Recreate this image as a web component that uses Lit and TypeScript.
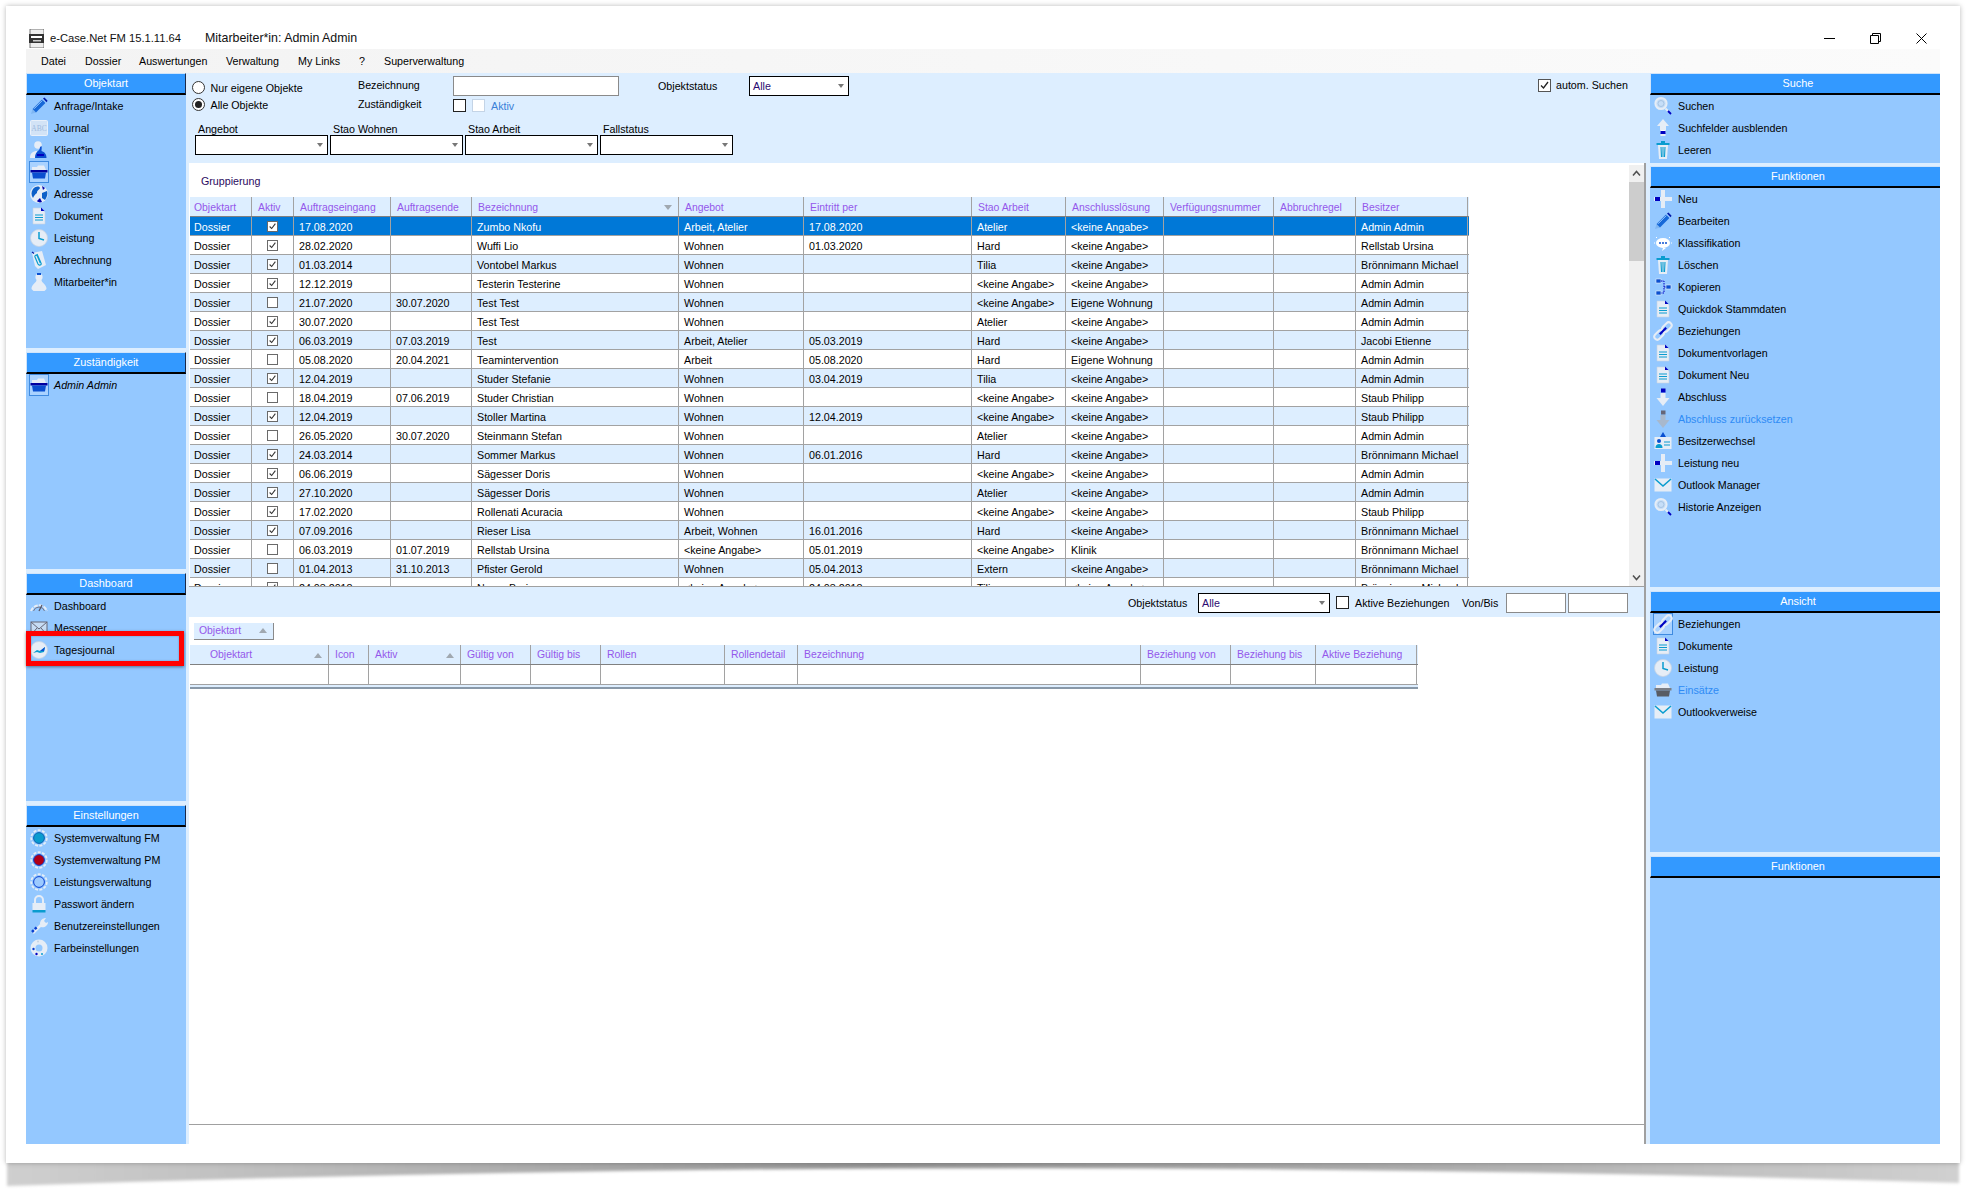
import { LitElement, html, css, svg } from "lit";
import { customElement } from "lit/decorators.js";

const B = "#0a4fd0", D = "#0000c0", T = "#0a9ccf", L = "#e6edf6", G = "#c6d3e2";
const docIcon = svg`<path d="M4 2h8l4 4v12H4z" fill="${L}" stroke="${G}" stroke-width=".6"/><path d="M12 1.5l3.5 3.5h-3.5z" fill="${D}"/><path d="M6 9h8M6 11.5h8M6 14h8" stroke="${T}" stroke-width="1.2"/>`;
const pencil = svg`<path d="M2 18l1.6-5 3.4 3.4z" fill="#7fb6f2"/><path d="M3.6 13L13 3.6l3.4 3.4L7 16.4z" fill="#1668d8"/><path d="M5 12.8l8.3-8.3" stroke="#9ccbff" stroke-width="1"/><path d="M14 2.6l1.4-1 3.2 3.2-1 1.4z" fill="#0018a8"/>`;
const trash = svg`<rect x="3.5" y="3" width="13" height="2" fill="${T}"/><rect x="8" y="1" width="4" height="2" fill="${T}"/><path d="M5 5h10l-1 14H6z" fill="${L}"/><path d="M8 7l.5 10M10 7v10M12 7l-.5 10" stroke="${T}" stroke-width="1.1"/>`;
const plus = svg`<path d="M8 1h4v7h7v4h-7v7H8v-7H1V8h7z" fill="${L}"/><rect x="2" y="8" width="5" height="4" fill="${D}"/>`;
const search = svg`<circle cx="8" cy="7.5" r="5.6" fill="#c6def8" stroke="${L}" stroke-width="2"/><circle cx="8" cy="7.5" r="3" fill="none" stroke="#a8c4e2"/><path d="M12.5 12.5l2.5 2.5" stroke="${L}" stroke-width="2"/><path d="M15 15l3 3" stroke="${D}" stroke-width="1.8"/>`;
const mailLight = svg`<rect x="1.5" y="3.5" width="17" height="13" fill="${L}"/><path d="M2 4l8 7 8-7" fill="none" stroke="${T}" stroke-width="1.6"/>`;
const clock = svg`<circle cx="10" cy="10" r="8.5" fill="${L}" stroke="${G}" stroke-width=".8"/><path d="M10 4v6.5l5 1.5" fill="none" stroke="${T}" stroke-width="1.5"/>`;
const boxIcon = (a: string, b: string) => svg`<path d="M3 8V5h5l1-1.5h6l2 4.500z" fill="${L}"/><rect x="1.5" y="8" width="17" height="2.5" fill="${b}"/><path d="M3 10.5h14l-1 6H4z" fill="${a}"/>`;
const link = svg`<g transform="rotate(-45 10 10)"><rect x="-1" y="7" width="11" height="6" rx="3" fill="none" stroke="${L}" stroke-width="2"/><rect x="10" y="7" width="11" height="6" rx="3" fill="none" stroke="${L}" stroke-width="2"/><rect x="5.5" y="9" width="9" height="2" fill="${D}"/></g>`;
const gear = (c: string, inner: string) => svg`<circle cx="10" cy="10" r="7.8" fill="none" stroke="${L}" stroke-width="1.8" stroke-dasharray="3 1.4"/><circle cx="10" cy="10" r="5.4" fill="${inner}" stroke="${c}" stroke-width="1"/>`;

const ICONS: Record<string, unknown> = {
  pencil,
  abc: svg`<rect x="1.5" y="2.5" width="17" height="15" rx="1" fill="#d2e3f6" stroke="#e8f0fa"/><text x="10" y="13" font-family="Liberation Serif" font-size="7.5" text-anchor="middle" fill="#9fbce0">ABC</text>`,
  user: svg`<circle cx="9" cy="5" r="3.8" fill="${L}"/><path d="M1 18c0-5 3-7 7-7v7z" fill="${L}"/><path d="M6 18c0-4 1.5-6 3-7 1-1 2-2 2-4l1.5-1c.5 2 0 3 0 5 3 1 5 3 5 7z" fill="${B}"/><path d="M8 15h7" stroke="${D}" stroke-width="2"/>`,
  box: boxIcon("#0a4fd0", "#0000a0"),
  globe: svg`<circle cx="10" cy="10" r="9" fill="${L}"/><path d="M4 5c3-3 6-3 7-1-1 2-3 2-3 5-2 1-3 3-4 5-2-3-2-6 0-9zM13 9l5-2c1 3 0 6-2 9l-3-2z" fill="#0d60c8"/><path d="M8 17l3-3 2 4c-2 .8-3.500.6-5-1z" fill="#0000a8"/><path d="M13 2l3 2-2 2z" fill="#0000a8"/>`,
  doc: docIcon,
  clock,
  clip: svg`<path d="M3 3l10-2 4 14-8 4-3-3z" fill="${L}"/><path d="M8 4l4 9c1 2-2 3-3 1L6 7c-.6-1.500 1.500-2.500 2.300-1l3 7" fill="none" stroke="${T}" stroke-width="1.200"/><path d="M3 2l2 1.500" stroke="#0018a8" stroke-width="1.200"/>`,
  person: svg`<circle cx="10" cy="5" r="3.600" fill="${L}"/><rect x="8" y="1" width="4" height="2" fill="#0a4fd0"/><path d="M7.500 8h5c0 3 5 4 5 9l-2 2H4.500l-2-2c0-5 5-6 5-9z" fill="${L}"/>`,
  dash: svg`<path d="M2 15a8.500 8.500 0 0 1 16 0" fill="none" stroke="${L}" stroke-width="2" stroke-dasharray="4 1"/><path d="M4.500 15a5.800 5.800 0 0 1 11 0" fill="none" stroke="#778" stroke-width="1"/><path d="M10 15l3-6" stroke="#556" stroke-width="1.200"/>`,
  mailDark: svg`<rect x="2" y="4" width="16" height="13" fill="#c6dcf4" stroke="#667" /><path d="M2 4l8 7 8-7M2 17l6-7M18 17l-6-7" fill="none" stroke="#667"/>`,
  chart: svg`<circle cx="10" cy="10" r="8.500" fill="${L}" stroke="${G}" stroke-width=".8"/><path d="M4 13l4-3 3 1 5-4-1 5-4 1-3-1z" fill="${T}"/><path d="M11 11l5-4-1 4z" fill="#0a4fd0"/>`,
  gearFm: gear("#0a60b0", T),
  gearPm: gear("#0a3fd0", "#b00018"),
  gearRing: gear("#0a3fd0", "#9ccaff"),
  lock: svg`<path d="M6 9V6a4 4 0 0 1 8 0v3" fill="none" stroke="${L}" stroke-width="2"/><rect x="3.500" y="9" width="13" height="7" fill="${L}"/><rect x="3.500" y="16" width="13" height="2.500" fill="${T}"/>`,
  wrench: svg`<path d="M12 9l-8 8" stroke="${L}" stroke-width="2.500"/><path d="M3 16l5-5" stroke="#0a3fd0" stroke-width="2.500" stroke-dasharray="2.500 1.500"/><path d="M11 8c0-4 3-6 6-6l-2 3 2 2 2-1c0 4-4 6-7 5z" fill="${L}"/>`,
  palette: svg`<circle cx="10" cy="10" r="8.500" fill="${L}"/><circle cx="10" cy="10" r="3.500" fill="#94c8ff"/><circle cx="4.500" cy="11" r="1.200" fill="#0a3fd0"/><circle cx="7.500" cy="16" r="1.200" fill="${D}"/><circle cx="13" cy="16" r="1" fill="${T}"/><circle cx="9" cy="3.500" r="1" fill="${G}"/>`,
  search,
  up: svg`<path d="M10 1l6 7h-3v4H7V8H4z" fill="${L}"/><rect x="7.500" y="12" width="5" height="3" fill="#ffffff"/><rect x="7.500" y="13" width="5" height="3" fill="${D}"/><rect x="7.500" y="16" width="5" height="2" fill="${L}"/>`,
  trash,
  plus,
  bubble: svg`<ellipse cx="10" cy="10" rx="7" ry="5" fill="#fff"/><path d="M10 15l-1 3 4-3z" fill="#fff"/><circle cx="7" cy="10" r="1" fill="${B}"/><circle cx="10" cy="10" r="1" fill="${B}"/><circle cx="13" cy="10" r="1" fill="${B}"/><path d="M1 10h1M18 10h1M3 4l1 1M17 4l-1 1" stroke="#fff"/>`,
  copy: svg`<rect x="3" y="2" width="5" height="4" fill="${B}" stroke="${L}" stroke-width=".6"/><rect x="13" y="8" width="5" height="4" fill="${B}" stroke="${L}" stroke-width=".6"/><rect x="3" y="14" width="5" height="4" fill="${B}" stroke="${L}" stroke-width=".6"/><path d="M8 4h3v12H8M11 10h2" fill="none" stroke="${D}" stroke-dasharray="1.500 1"/>`,
  link,
  down: svg`<rect x="8" y="1.500" width="4.500" height="4" fill="${D}"/><path d="M7.500 6h5v5h4l-6.500 8L3.500 11h4z" fill="${L}"/>`,
  downGrey: svg`<rect x="8" y="1.500" width="4.500" height="4" fill="#667"/><path d="M7.500 6h5v5h4l-6.500 8L3.500 11h4z" fill="#a8b8cc"/>`,
  people: svg`<rect x="1.500" y="6" width="17" height="12" fill="${L}"/><circle cx="6" cy="10" r="2" fill="${B}"/><path d="M2.500 17c0-3 1.500-4 3.500-4s3.500 1 3.500 4z" fill="${T}"/><path d="M11 11h6M11 14h6" stroke="${T}" stroke-width="1.200"/><path d="M7 6l3-5 3 5z" fill="${B}"/>`,
  mail: mailLight,
  boxGrey: boxIcon("#585c64", "#7a7e86"),
};

const ic = (name: string) => html`<svg class="ic" viewBox="0 0 20 20" width="20" height="20">${ICONS[name]}</svg>`;
const KA = "<keine Angabe>";
const AA = "Admin Admin", BM = "Brönnimann Michael", SP = "Staub Philipp";

type Row = [boolean, string, string, string, string, string, string, string, string];
const ROWS: Row[] = [
  [true, "17.08.2020", "", "Zumbo Nkofu", "Arbeit, Atelier", "17.08.2020", "Atelier", KA, AA],
  [true, "28.02.2020", "", "Wuffi Lio", "Wohnen", "01.03.2020", "Hard", KA, "Rellstab Ursina"],
  [true, "01.03.2014", "", "Vontobel Markus", "Wohnen", "", "Tilia", KA, BM],
  [true, "12.12.2019", "", "Testerin Testerine", "Wohnen", "", KA, KA, AA],
  [false, "21.07.2020", "30.07.2020", "Test Test", "Wohnen", "", KA, "Eigene Wohnung", AA],
  [true, "30.07.2020", "", "Test Test", "Wohnen", "", "Atelier", KA, AA],
  [true, "06.03.2019", "07.03.2019", "Test", "Arbeit, Atelier", "05.03.2019", "Hard", KA, "Jacobi Etienne"],
  [false, "05.08.2020", "20.04.2021", "Teamintervention", "Arbeit", "05.08.2020", "Hard", "Eigene Wohnung", AA],
  [true, "12.04.2019", "", "Studer Stefanie", "Wohnen", "03.04.2019", "Tilia", KA, AA],
  [false, "18.04.2019", "07.06.2019", "Studer Christian", "Wohnen", "", KA, KA, SP],
  [true, "12.04.2019", "", "Stoller Martina", "Wohnen", "12.04.2019", KA, KA, SP],
  [false, "26.05.2020", "30.07.2020", "Steinmann Stefan", "Wohnen", "", "Atelier", KA, AA],
  [true, "24.03.2014", "", "Sommer Markus", "Wohnen", "06.01.2016", "Hard", KA, BM],
  [true, "06.06.2019", "", "Sägesser Doris", "Wohnen", "", KA, KA, AA],
  [true, "27.10.2020", "", "Sägesser Doris", "Wohnen", "", "Atelier", KA, AA],
  [true, "17.02.2020", "", "Rollenati Acuracia", "Wohnen", "", KA, KA, SP],
  [true, "07.09.2016", "", "Rieser Lisa", "Arbeit, Wohnen", "16.01.2016", "Hard", KA, BM],
  [false, "06.03.2019", "01.07.2019", "Rellstab Ursina", KA, "05.01.2019", KA, "Klinik", BM],
  [false, "01.04.2013", "31.10.2013", "Pfister Gerold", "Wohnen", "05.04.2013", "Extern", KA, BM],
  [true, "24.03.2018", "", "Neuer Boris", KA, "24.03.2018", "Tilia", KA, BM],
];

const HEAD = ["Objektart", "Aktiv", "Auftragseingang", "Auftragsende", "Bezeichnung", "Angebot", "Eintritt per", "Stao Arbeit", "Anschlusslösung", "Verfügungsnummer", "Abbruchregel", "Besitzer"];
const HEAD2 = ["Objektart", "Icon", "Aktiv", "Gültig von", "Gültig bis", "Rollen", "Rollendetail", "Bezeichnung", "Beziehung von", "Beziehung bis", "Aktive Beziehung"];

interface Item { t: string; i: string; sel?: boolean; off?: boolean; it?: boolean }
interface Section { h: string; items: Item[] }

const LEFT: Section[] = [
  { h: "Objektart", items: [
    { t: "Anfrage/Intake", i: "pencil" }, { t: "Journal", i: "abc" }, { t: "Klient*in", i: "user" },
    { t: "Dossier", i: "box", sel: true }, { t: "Adresse", i: "globe" }, { t: "Dokument", i: "doc" },
    { t: "Leistung", i: "clock" }, { t: "Abrechnung", i: "clip" }, { t: "Mitarbeiter*in", i: "person" } ] },
  { h: "Zuständigkeit", items: [{ t: "Admin Admin", i: "box", sel: true, it: true }] },
  { h: "Dashboard", items: [{ t: "Dashboard", i: "dash" }, { t: "Messenger", i: "mailDark" }, { t: "Tagesjournal", i: "chart" }] },
  { h: "Einstellungen", items: [
    { t: "Systemverwaltung FM", i: "gearFm" }, { t: "Systemverwaltung PM", i: "gearPm" }, { t: "Leistungsverwaltung", i: "gearRing" },
    { t: "Passwort ändern", i: "lock" }, { t: "Benutzereinstellungen", i: "wrench" }, { t: "Farbeinstellungen", i: "palette" } ] },
];
const RIGHT: Section[] = [
  { h: "Suche", items: [{ t: "Suchen", i: "search" }, { t: "Suchfelder ausblenden", i: "up" }, { t: "Leeren", i: "trash" }] },
  { h: "Funktionen", items: [
    { t: "Neu", i: "plus" }, { t: "Bearbeiten", i: "pencil" }, { t: "Klassifikation", i: "bubble" }, { t: "Löschen", i: "trash" },
    { t: "Kopieren", i: "copy" }, { t: "Quickdok Stammdaten", i: "doc" }, { t: "Beziehungen", i: "link" }, { t: "Dokumentvorlagen", i: "doc" },
    { t: "Dokument Neu", i: "doc" }, { t: "Abschluss", i: "down" }, { t: "Abschluss zurücksetzen", i: "downGrey", off: true },
    { t: "Besitzerwechsel", i: "people" }, { t: "Leistung neu", i: "plus" }, { t: "Outlook Manager", i: "mail" }, { t: "Historie Anzeigen", i: "search" } ] },
  { h: "Ansicht", items: [
    { t: "Beziehungen", i: "link", sel: true }, { t: "Dokumente", i: "doc" }, { t: "Leistung", i: "clock" },
    { t: "Einsätze", i: "boxGrey", off: true }, { t: "Outlookverweise", i: "mail" } ] },
  { h: "Funktionen", items: [] },
];

@customElement("app-root")
export class AppRoot extends LitElement {
  static styles = css`
    :host { display: block; position: relative; width: 1974px; height: 1193px; background: #fff; overflow: hidden;
      font: 10.7px "Liberation Sans", Arial, sans-serif; color: #000; }
    * { box-sizing: border-box; }
    .shadow { position: absolute; left: 0; top: 1150px; }
    .window { position: relative; margin: 6px 0 0 6px; width: 1954px; height: 1157px; background: #fff;
      box-shadow: 0 0 5px rgba(0,0,0,.28); padding: 0 20px; display: flex; flex-direction: column; }
    .titlebar { height: 43px; display: flex; align-items: center; padding: 21px 0 0 3px; font-size: 12.4px; color: #111; }
    .appicon { width: 15px; height: 19px; margin-right: 6px; flex: none; }
    .appname { width: 155px; font-size: 11.2px; }
    .winbtns { margin-left: auto; display: flex; margin-right: 13px; }
    .winbtns svg { display: block; margin-left: 35px; }
    .menu { height: 24px; background: linear-gradient(90deg, #f3f3f3, #fbfbfb); display: grid;
      grid-template-columns: 44px 54px 87px 72px 61px 25px auto; padding-left: 15px; align-items: center; }
    .body { height: 1071px; display: grid; grid-template-columns: 160px 1464px 290px; background: #ddeeff; }
    .col { display: grid; row-gap: 4px; }
    .col.l { grid-template-rows: 275px 217px 228px 339px; }
    .col.r { grid-template-rows: 90px 420px 261px 288px; }
    .col.r .section:nth-child(2) { margin-top: -1px; }
    .section { background: #94c8ff; display: flex; flex-direction: column; overflow: hidden; }
    .hd { height: 22px; flex: none; background: #3399ff; color: #fff; text-align: center; line-height: 19px;
      border-top: 1px solid #cfe4fb; border-left: 1px solid #cfe4fb; border-bottom: 2px solid #000; font-size: 10.9px; }
    .l .hd { border-right: 1px solid #1b2a4a; }
    .r .hd { padding-left: 5px; }
    .item { height: 22px; flex: none; display: flex; align-items: center; padding-left: 3px; gap: 5px; }
    .item.off { color: #2e8bf5; }
    .item.it { font-style: italic; }
    .iw { width: 20px; height: 22px; display: flex; align-items: center; justify-content: center; }
    .iw.sel { background: #a9d2ff; border: 1px solid #3f8be0; }
    .ic { display: block; flex: none; }
    .center { display: flex; flex-direction: column; min-width: 0; margin-left: 3px; }
    .search { height: 90px; flex: none; background: #ddeeff; width: 1461px; }
    .s-top { height: 50px; display: flex; padding-left: 2.5px; }
    .radios { width: 166.5px; padding-top: 6px; }
    .rd { height: 17px; display: flex; align-items: center; gap: 6px; }
    .radio { width: 13px; height: 13px; border-radius: 50%; border: 1px solid #333; background: #fff; display: flex; align-items: center; justify-content: center; }
    .radio i { width: 7px; height: 7px; background: #222; border-radius: 50%; display: block; }
    .labels { width: 95px; padding-top: 3px; }
    .labels div { height: 19px; line-height: 19px; }
    .inputs { width: 205px; padding-top: 3px; }
    .txt { height: 20px; background: #fff; border: 1px solid #8a8a8a; display: block; }
    .inputs .txt { width: 166px; }
    .inline { display: flex; align-items: center; gap: 6px; height: 19px; }
    .cb { width: 13px; height: 13px; border: 1px solid #222; background: #fff; display: block; flex: none; }
    .cb.dis { border-color: #c4d4e6; }
    .dislabel { color: #3a7fd8; }
    .st-label { width: 91px; padding-top: 4px; line-height: 19px; }
    .combo { height: 20px; background: #fff; border: 1px solid #000; position: relative; display: flex; align-items: center; padding-left: 3px; color: #2b0a70; }
    .combo::after { content: ""; margin-left: auto; margin-right: 4px; border: 3.5px solid transparent; border-top: 4px solid #777; border-bottom: 0; }
    .st-combo { width: 100px; margin-top: 3px; }
    .auto { margin-left: auto; width: 112px; display: flex; gap: 5px; padding-top: 6px; align-items: flex-start; }
    .auto .cb { border-color: #555; }
    .auto span { line-height: 12px; }
    .ck { display: block; }
    .s-bot { display: grid; grid-template-columns: repeat(4, 133px); column-gap: 2px; margin-left: 6px; }
    .s-bot label { display: block; height: 12px; line-height: 12px; padding-left: 3px; }
    .work { flex: 1; width: 1457px; background: #fff; border-right: 2px solid #a0a0a0; display: flex; flex-direction: column; min-height: 0; }
    .upper { height: 423.5px; flex: none; display: flex; border-bottom: 1.5px solid #a0a0a0; }
    .gridwrap { width: 1440px; overflow: hidden; padding-left: 1px; }
    .group { height: 34px; padding: 10px 0 0 11px; line-height: 16px; color: #2b0a60; }
    .row { display: grid; grid-template-columns: 62px 42px 97px 81px 207px 125px 168px 94px 98px 110px 82px 112px; width: 1279px; height: 19px; border-bottom: 1px solid #a2a2a2; background: #fff; }
    .row.alt { background: #ddeeff; }
    .row.sel { background: #0078d7; color: #fff; }
    .row.head { height: 20px; background: #ddeeff; color: #9457eb; border-bottom-color: #808080; font-size: 10.4px; }
    .c { border-right: 1px solid #a2a2a2; padding: 2px 0 0 5px; line-height: 16px; white-space: nowrap; overflow: hidden; display: flex; align-items: center; }
    .c:first-child { padding-left: 4px; }
    .head .c { padding-left: 6px; }
    .head .c:first-child { padding-left: 4px; }
    .c.chk { justify-content: center; padding: 0; }
    .gcb { width: 11px; height: 11px; border: 1px solid #6a6a6a; background: #fff; display: block; }
    .sort { margin-left: auto; margin-right: 6px; border: 4px solid transparent; border-top: 5px solid #a0a8b0; border-bottom: 0; }
    .sortup { margin-left: auto; margin-right: 6px; border: 4px solid transparent; border-bottom: 5px solid #a0a8b0; border-top: 0; }
    .scroll { width: 15px; margin-top: 2px; background: #f0f0f0; display: flex; flex-direction: column; }
    .scroll .btn { height: 17px; display: flex; align-items: center; justify-content: center; flex: none; }
    .thumb { height: 79px; background: #cdcdcd; flex: none; }
    .scroll .fill { flex: 1; }
    .filter { height: 30px; flex: none; background: #ddeeff; display: flex; align-items: center; justify-content: flex-end; padding: 2px 16px 0 0; }
    .filter .lab { white-space: nowrap; }
    .f1 { width: 70px; }
    .f2 { width: 132px; }
    .f3 { margin: 0 6px; }
    .f4 { width: 107px; }
    .f5 { width: 44px; }
    .f6 { width: 60px; }
    .f7 { width: 60px; margin-left: 2px; }
    .chip { margin: 6px 0 5px 5px; width: 80px; height: 17px; background: #ddeeff; border-right: 1px solid #8a8a8a; border-bottom: 1px solid #8a8a8a; color: #9457eb; display: flex; align-items: center; padding-left: 5px; flex: none; font-size: 10.4px; }
    .lower { margin-left: 1px; width: 1228px; flex: none; }
    .row2 { display: grid; grid-template-columns: 139px 40px 92px 70px 70px 124px 73px 343px 90px 85px 101px; height: 20px; border-bottom: 1px solid #a2a2a2; }
    .row2.head { background: #ddeeff; color: #9457eb; border-bottom-color: #808080; font-size: 10.4px; }
    .row2.head .c:first-child { padding-left: 20px; }
    .band { height: 4px; background: #ddeeff; border-bottom: 2px solid #8898a8; }
    .filler { flex: 1; border-bottom: 1px solid #a0a0a0; }
    .tail { height: 19px; flex: none; }
    .mark { position: absolute; left: 20px; top: 625px; width: 158px; height: 35px; border: 5px solid #ff0000; box-shadow: 0 1px 3px rgba(0,0,0,.45), inset 0 0 2px rgba(0,0,0,.3); }
  `;

  private section(s: Section) {
    return html`<div class="section"><div class="hd">${s.h}</div>${s.items.map(
      (it) => html`<div class="item ${it.off ? "off" : ""} ${it.it ? "it" : ""}"><span class="iw ${it.sel ? "sel" : ""}">${ic(it.i)}</span><span>${it.t}</span></div>`
    )}</div>`;
  }

  private check(color = "#222") {
    return html`<svg class="ck" viewBox="0 0 11 11" width="100%" height="100%"><path d="M2 5.500l2.500 2.500L9 2" fill="none" stroke="${color}" stroke-width="1.300"/></svg>`;
  }

  render() {
    return html`
      <svg class="shadow" width="1974" height="43" viewBox="0 1150 1974 43">
        <defs>
          <linearGradient id="sg"><stop offset="0" stop-color="#cfcfcf"/><stop offset=".45" stop-color="#959595"/><stop offset=".75" stop-color="#b0b0b0"/><stop offset="1" stop-color="#d0d0d0"/></linearGradient>
          <filter id="sb"><feGaussianBlur stdDeviation="1.500"/></filter>
        </defs>
        <path d="M7 1160H1959V1183Q983 1152 7 1186Z" fill="url(#sg)" filter="url(#sb)"/>
      </svg>
      <div class="window">
        <div class="titlebar">
          <svg class="appicon" viewBox="0 0 15 19"><rect x="1" y="0" width="14" height="19" fill="#eee" stroke="#555" stroke-width=".8"/><rect x="0" y="5" width="15" height="9" fill="#333"/><rect x="2" y="7" width="11" height="2" fill="#fff"/><rect x="4" y="11" width="8" height="1.500" fill="#ccc"/></svg>
          <span class="appname">e-Case.Net FM 15.1.11.64</span>
          <span>Mitarbeiter*in: Admin Admin</span>
          <div class="winbtns">
            <svg width="11" height="11" viewBox="0 0 11 11"><path d="M0 5.500h11" stroke="#000"/></svg>
            <svg width="11" height="11" viewBox="0 0 11 11"><path d="M.5 2.500h8v8h-8zM2.500 2.500v-2h8v8h-2" fill="none" stroke="#000"/></svg>
            <svg width="11" height="11" viewBox="0 0 11 11"><path d="M.5.500l10 10M10.500.500l-10 10" stroke="#000"/></svg>
          </div>
        </div>
        <div class="menu">${["Datei", "Dossier", "Auswertungen", "Verwaltung", "My Links", "?", "Superverwaltung"].map((m) => html`<span>${m}</span>`)}</div>
        <div class="body">
          <div class="col l">${LEFT.map((s) => this.section(s))}</div>
          <div class="center">
            <div class="search">
              <div class="s-top">
                <div class="radios">
                  <div class="rd"><span class="radio"></span><span>Nur eigene Objekte</span></div>
                  <div class="rd"><span class="radio"><i></i></span><span>Alle Objekte</span></div>
                </div>
                <div class="labels"><div>Bezeichnung</div><div>Zuständigkeit</div></div>
                <div class="inputs">
                  <span class="txt"></span>
                  <div class="inline"><span class="cb"></span><span class="cb dis"></span><span class="dislabel">Aktiv</span></div>
                </div>
                <div class="st-label">Objektstatus</div>
                <div class="combo st-combo">Alle</div>
                <div class="auto"><span class="cb">${this.check()}</span><span>autom. Suchen</span></div>
              </div>
              <div class="s-bot">
                ${["Angebot", "Stao Wohnen", "Stao Arbeit", "Fallstatus"].map((l) => html`<div><label>${l}</label><div class="combo"></div></div>`)}
              </div>
            </div>
            <div class="work">
              <div class="upper">
                <div class="gridwrap">
                  <div class="group">Gruppierung</div>
                  <div class="row head">${HEAD.map((h) => html`<div class="c">${h}${h === "Bezeichnung" ? html`<span class="sort"></span>` : ""}</div>`)}</div>
                  ${ROWS.map((r, i) => html`<div class="row ${i === 0 ? "sel" : i % 2 === 0 ? "alt" : ""}">
                    <div class="c">Dossier</div>
                    <div class="c chk"><span class="gcb">${r[0] ? this.check("#333") : ""}</span></div>
                    <div class="c">${r[1]}</div><div class="c">${r[2]}</div><div class="c">${r[3]}</div><div class="c">${r[4]}</div>
                    <div class="c">${r[5]}</div><div class="c">${r[6]}</div><div class="c">${r[7]}</div><div class="c"></div><div class="c"></div><div class="c">${r[8]}</div>
                  </div>`)}
                </div>
                <div class="scroll">
                  <div class="btn"><svg width="9" height="7" viewBox="0 0 9 7"><path d="M1 5.500l3.500-4 3.500 4" fill="none" stroke="#505050" stroke-width="1.500"/></svg></div>
                  <div class="thumb"></div>
                  <div class="fill"></div>
                  <div class="btn"><svg width="9" height="7" viewBox="0 0 9 7"><path d="M1 1.500l3.500 4 3.500-4" fill="none" stroke="#505050" stroke-width="1.500"/></svg></div>
                </div>
              </div>
              <div class="filter">
                <span class="lab f1">Objektstatus</span>
                <div class="combo f2">Alle</div>
                <span class="cb f3"></span>
                <span class="lab f4">Aktive Beziehungen</span>
                <span class="lab f5">Von/Bis</span>
                <span class="txt f6"></span>
                <span class="txt f7"></span>
              </div>
              <div class="chip">Objektart<span class="sortup"></span></div>
              <div class="lower">
                <div class="row2 head">${HEAD2.map((h, i) => html`<div class="c">${h}${i === 0 || i === 2 ? html`<span class="sortup"></span>` : ""}</div>`)}</div>
                <div class="row2">${HEAD2.map(() => html`<div class="c"></div>`)}</div>
                <div class="band"></div>
              </div>
              <div class="filler"></div>
              <div class="tail"></div>
            </div>
          </div>
          <div class="col r">${RIGHT.map((s) => this.section(s))}</div>
        </div>
        <div class="mark"></div>
      </div>
    `;
  }
}
